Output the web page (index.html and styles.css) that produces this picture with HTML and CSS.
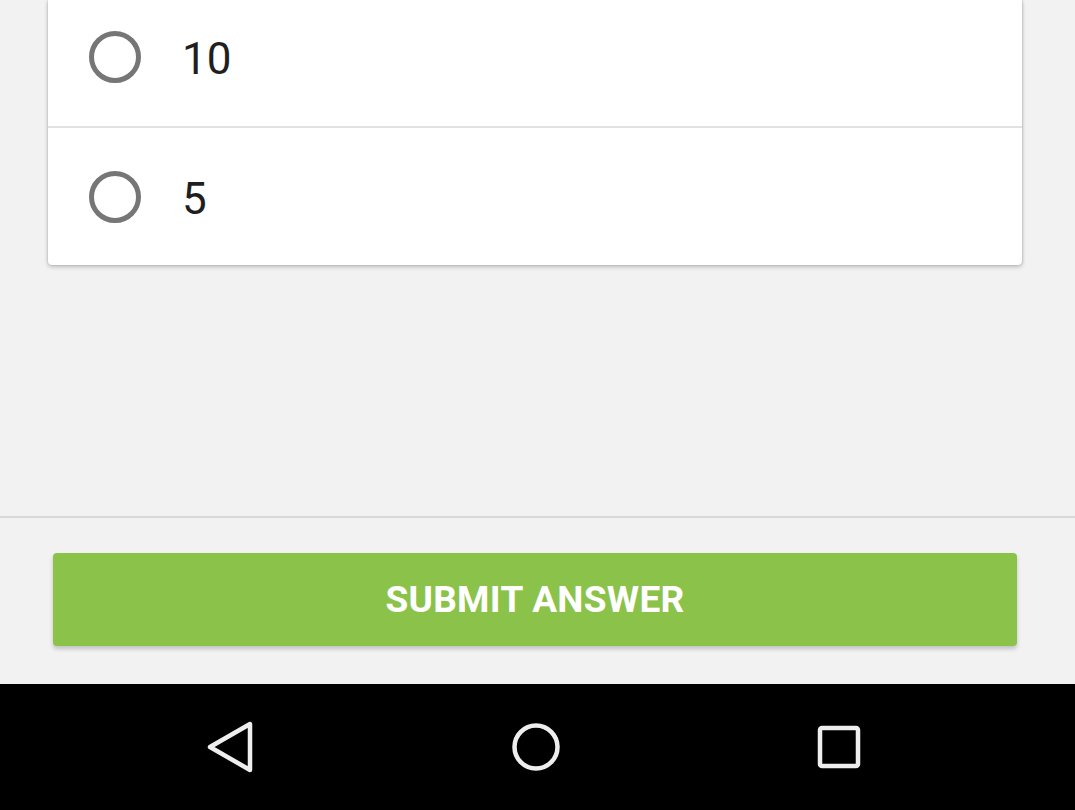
FILE: index.html
```html
<!DOCTYPE html>
<html>
<head>
<meta charset="utf-8">
<link rel="stylesheet" href="styles.css">
</head>
<body>
<div class="screen">
  <main class="content">
    <section class="card">
      <label class="option first">
        <span class="radio"></span>
        <span class="option-text">10</span>
      </label>
      <label class="option second">
        <span class="radio"></span>
        <span class="option-text">5</span>
      </label>
    </section>
    <div class="spacer"></div>
    <footer class="footer">
      <button class="submit">SUBMIT ANSWER</button>
    </footer>
  </main>
  <nav class="navbar">
    <svg class="nav-icon" width="52" height="56" viewBox="0 0 52 56">
      <path d="M46 5 L46 51 L6 28 Z" fill="none" stroke="#eeeeee" stroke-width="4.5" stroke-linejoin="round"/>
    </svg>
    <svg class="nav-icon" width="52" height="52" viewBox="0 0 52 52">
      <circle cx="26" cy="26" r="21.5" fill="none" stroke="#eeeeee" stroke-width="4.5"/>
    </svg>
    <svg class="nav-icon" width="46" height="46" viewBox="0 0 46 46">
      <rect x="4" y="4" width="38" height="38" rx="2" fill="none" stroke="#eeeeee" stroke-width="4.5"/>
    </svg>
  </nav>
</div>
</body>
</html>
```

FILE: styles.css
```css
html, body {
  margin: 0;
  padding: 0;
}

body {
  background: #f2f2f2;
  font-family: Roboto, "Liberation Sans", Arial, sans-serif;
}

.screen {
  width: 1075px;
  height: 810px;
  overflow: hidden;
  display: flex;
  flex-direction: column;
}

.content {
  height: 684px;
  display: flex;
  flex-direction: column;
  background: #f2f2f2;
}

.card {
  margin: 0 53px 0 48px;
  background: #ffffff;
  border-radius: 0 0 4px 4px;
  box-shadow: 0 2px 4px rgba(0, 0, 0, 0.22), 1px 0 2px rgba(0, 0, 0, 0.1), -1px 0 2px rgba(0, 0, 0, 0.08);
}

.option {
  display: flex;
  align-items: center;
  padding-left: 41px;
  box-sizing: border-box;
}

.option.first {
  height: 128px;
  padding-bottom: 12px;
  border-bottom: 2px solid #e2e2e2;
}

.option.second {
  height: 137px;
  padding-bottom: 0;
}

.radio {
  width: 52px;
  height: 52px;
  box-sizing: border-box;
  border: 5.5px solid #767676;
  border-radius: 50%;
  flex: none;
}

.option-text {
  margin-left: 41px;
  margin-top: 4px;
  font-size: 44px;
  color: #1f1f1f;
  line-height: 1;
}

.spacer {
  flex: 1;
}

.footer {
  border-top: 2px solid #d8d8d8;
  padding: 35px 58px 38px 53px;
}

.submit {
  display: block;
  width: 100%;
  height: 93px;
  border: none;
  border-radius: 4px;
  background: #8bc34a;
  color: #ffffff;
  font-family: Roboto, "Liberation Sans", Arial, sans-serif;
  font-weight: 700;
  font-size: 37px;
  letter-spacing: 0.3px;
  box-shadow: 0 3px 4px rgba(0, 0, 0, 0.2);
  padding: 0;
}

.navbar {
  height: 126px;
  background: #000000;
  display: flex;
  align-items: center;
  justify-content: space-between;
  padding: 0 213px 0 204px;
}

.nav-icon {
  display: block;
}
```
